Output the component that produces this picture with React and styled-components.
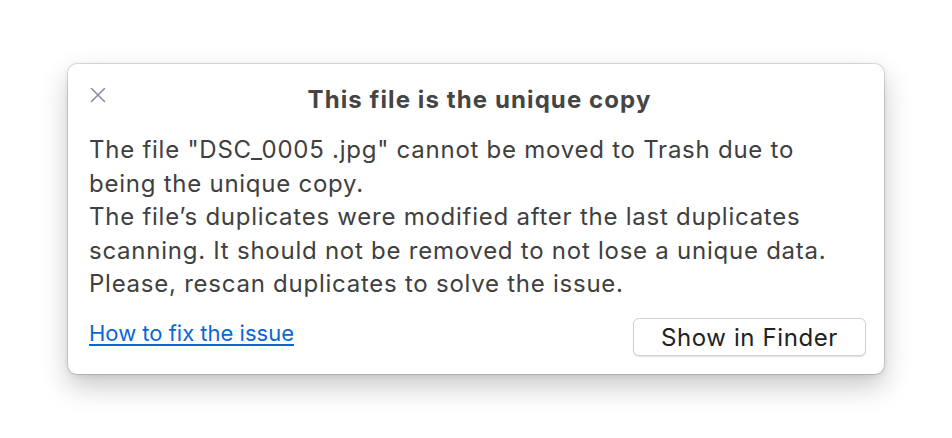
import React from "react";
import styled, { createGlobalStyle } from "styled-components";

const Global = createGlobalStyle`
  html, body { margin: 0; padding: 0; background: #ffffff; }
  body { font-family: Inter, "Noto Sans", "Liberation Sans", sans-serif; -webkit-font-smoothing: antialiased; }
`;

const Page = styled.div`
  width: 952px;
  height: 438px;
  box-sizing: border-box;
  padding: 64px 0 0 68px;
`;

const Dialog = styled.div`
  width: 816px;
  height: 310px;
  box-sizing: border-box;
  background: #ffffff;
  border-radius: 9px;
  box-shadow: 0 0 0 1px rgba(0, 0, 0, 0.12), 0 12px 28px rgba(0, 0, 0, 0.22), 0 2px 6px rgba(0, 0, 0, 0.08);
  padding: 20px 18px 18px 21px;
  display: flex;
  flex-direction: column;
`;

const Header = styled.div`
  position: relative;
  height: 30px;
  display: flex;
  align-items: center;
  justify-content: center;
`;

const CloseButton = styled.button`
  position: absolute;
  left: -2px;
  top: 0px;
  width: 22px;
  height: 22px;
  padding: 0;
  border: none;
  background: transparent;
  display: flex;
  align-items: center;
  justify-content: center;
`;

const Title = styled.h1`
  margin: 0 0 0 4px;
  font-size: 24px;
  font-weight: 700;
  color: #454545;
  letter-spacing: 1.1px;
`;

const Body = styled.p`
  margin: 19px 0 0 0;
  font-size: 24px;
  line-height: 33.6px;
  color: #404040;
  letter-spacing: 0.75px;
`;

const Footer = styled.div`
  margin-top: auto;
  display: flex;
  justify-content: space-between;
  align-items: flex-start;
`;

const Link = styled.a`
  font-size: 22px;
  color: #0b66d6;
  text-decoration: underline;
  text-underline-offset: 3px;
  text-decoration-thickness: 1.5px;
  margin-top: 1px;
  line-height: 28px;
`;

const Button = styled.button`
  width: 233px;
  height: 38px;
  box-sizing: border-box;
  background: #ffffff;
  border: 1px solid #d2d2d2;
  border-radius: 6px;
  box-shadow: 0 1px 1px rgba(0, 0, 0, 0.12);
  font-family: inherit;
  font-size: 24px;
  letter-spacing: 0.6px;
  color: #222222;
  padding: 0;
`;

export default function App() {
  return (
    <>
      <Global />
      <Page>
        <Dialog>
          <Header>
            <CloseButton aria-label="Close">
              <svg width="16" height="16" viewBox="0 0 16 16">
                <path d="M1.5 1.5 L14.5 14.5 M14.5 1.5 L1.5 14.5" stroke="#8c8ca4" strokeWidth="1.6" strokeLinecap="round" />
              </svg>
            </CloseButton>
            <Title>This file is the unique copy</Title>
          </Header>
          <Body>
            The file "DSC_0005 .jpg" cannot be moved to Trash due to
            <br />
            being the unique copy.
            <br />
            The file’s duplicates were modified after the last duplicates
            <br />
            scanning. It should not be removed to not lose a unique data.
            <br />
            Please, rescan duplicates to solve the issue.
          </Body>
          <Footer>
            <Link href="#">How to fix the issue</Link>
            <Button>Show in Finder</Button>
          </Footer>
        </Dialog>
      </Page>
    </>
  );
}
